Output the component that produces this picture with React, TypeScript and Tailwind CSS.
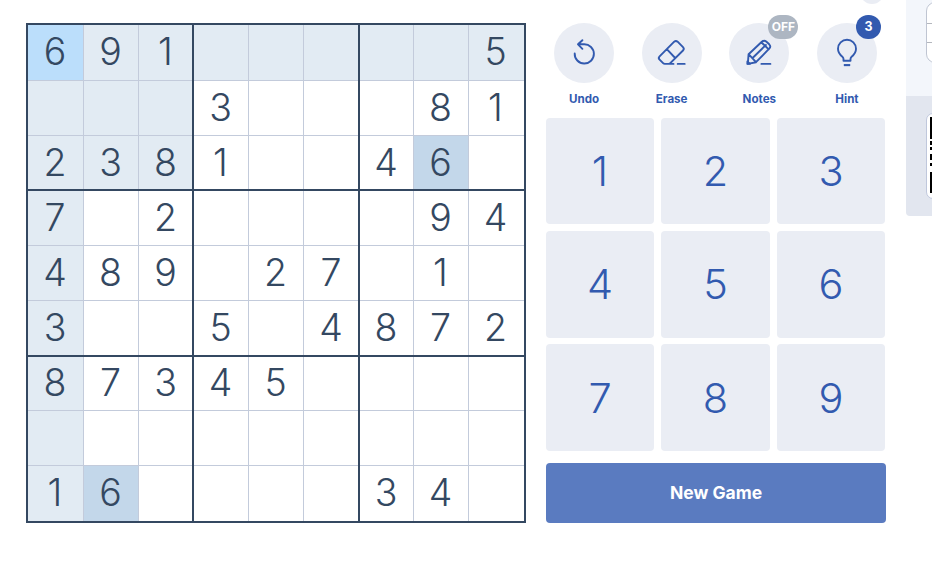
import React from "react";

const rows = [
  "691.....5",
  "...3...81",
  "2381..46.",
  "7.2....94",
  "489.27.1.",
  "3..5.4872",
  "87345....",
  ".........",
  "16....34.",
];

function cellColor(r: number, c: number) {
  if (r === 0 && c === 0) return "bg-[#bbdefb]";
  if (rows[r][c] === "6") return "bg-[#c3d7ea]";
  if (r === 0 || c === 0 || (r < 3 && c < 3)) return "bg-[#e2ebf3]";
  return "bg-white";
}

function Board() {
  return (
    <div className="grid h-[500px] w-[500px] shrink-0 grid-cols-[56px_55px_55px_55px_55px_56px_54px_55px_55px] grid-rows-[56px_55px_55px_55px_55px_56px_54px_55px_55px] border-2 border-[#344861]">
      {rows.flatMap((row, r) =>
        row.split("").map((d, c) => (
          <div
            key={`${r}-${c}`}
            className={[
              "relative flex items-center justify-center pb-[2px] text-[37.5px] leading-none font-light text-[#344861]",
              cellColor(r, c),
            ].join(" ")}
          >
            <span className="pr-[2px]">
              {d === "." ? "" : d}
            </span>
            {c < 8 && (
              <i
                className={
                  c % 3 === 2
                    ? "absolute inset-y-0 right-0 z-10 w-[2px] bg-[#344861]"
                    : "absolute inset-y-0 right-0 w-px bg-[#c3cbdb]"
                }
              />
            )}
            {r < 8 && (
              <i
                className={
                  r % 3 === 2
                    ? "absolute inset-x-0 bottom-0 z-10 h-[2px] bg-[#344861]"
                    : "absolute inset-x-0 bottom-0 h-px bg-[#c3cbdb]"
                }
              />
            )}
          </div>
        ))
      )}
    </div>
  );
}

const stroke = {
  fill: "none",
  stroke: "#325aaf",
  strokeWidth: 1.9,
  strokeLinecap: "round" as const,
  strokeLinejoin: "round" as const,
};

const UndoIcon = (
  <svg viewBox="0 0 60 60" className="size-[60px]" {...stroke}>
    <path d="M20.7 30.5A9.6 9.6 0 1 0 30 21.3H24.2M28.4 17.2 24 21.3l4.4 4.5" />
  </svg>
);
const EraseIcon = (
  <svg viewBox="0 0 60 60" className="size-[60px]" {...stroke}>
    <path d="M32.2 18.7q1.7-1.6 3.4 0l5.4 5.4q1.7 1.7 0 3.4L28.3 40.2q-.7.7-1.7.7h-3.8q-1 0-1.7-.7l-3.5-3.5q-1.7-1.7 0-3.4ZM24.8 26.2l8.4 8.8M26.5 40.9h5M35.7 40.9h7" />
  </svg>
);
const NotesIcon = (
  <svg viewBox="0 0 60 60" className="size-[60px]" {...stroke}>
    <path d="m19.6 31.2 13.2-12.5q2.3-2 4.4-.2l3 2.8q2.2 2.2 0 4.4L27 39.2l-8.2 1.7ZM19.6 31.2l7.4 8M23.3 35.2l13.6-13.2M32.3 19.2l7.4 7.2M32.4 40.9h9" />
    <path d="m18.4 38.5 2.6 2.4h-2.6Z" fill="#325aaf" />
  </svg>
);
const HintIcon = (
  <svg viewBox="0 0 60 60" className="size-[60px]" {...stroke}>
    <path d="M26.5 37.7v-1.6q0-1.5-1.1-2.4-4.4-3.3-4.4-7.9a9 9 0 0 1 18 0q0 4.6-4.4 7.9-1.1.9-1.1 2.4v1.6Z" />
    <path d="M26.8 42.1h6.4" strokeWidth="2.1" strokeLinecap="butt" />
  </svg>
);

function Tool({ icon, label, badge }: { icon: React.ReactNode; label: string; badge?: React.ReactNode }) {
  return (
    <div className="relative flex w-[60px] flex-col items-center">
      <div className="size-[60px] rounded-full bg-[#eaedf4]">{icon}</div>
      <span className="mt-2 text-[11.6px] leading-4 font-bold text-[#325aaf]">{label}</span>
      {badge}
    </div>
  );
}

function QrPreview() {
  return (
    <div className="h-[216px] w-[26px] shrink-0 overflow-hidden rounded-bl-[4px] bg-[#e2e6ef]">
      <div className="h-24 bg-[#f3f6fb] pl-5">
        <div className="flex h-[63px] w-10 flex-col pt-[2px]">
          <div className="flex h-[62px] flex-col rounded-[9px] border border-[#bfc5d2] bg-white">
            <div className="h-[21px] border-b border-[#b4b7be]" />
            <div className="h-[19px] border-b border-[#b4b7be]" />
          </div>
        </div>
      </div>
      <div className="pt-[17px] pl-5">
        <div className="h-[86px] w-20 rounded-[7px] border border-[#bfc7dc] bg-white pt-[3px] pl-[3px]">
          <svg viewBox="0 0 20 76" className="h-[76px] w-5" shapeRendering="crispEdges">
            <path d="M0 0h20v22H0zM0 24h20v4H0zM0 30h20v3H0zM0 37h20v6H0zM0 46h20v3H0zM0 55h20v21H0z" />
          </svg>
        </div>
      </div>
    </div>
  );
}

export default function App() {
  return (
    <div className="flex h-[568px] w-[932px] overflow-hidden bg-white font-['Inter','Liberation_Sans',sans-serif]">
      <div className="pt-[23px] pl-[26px]">
        <Board />
      </div>
      <div className="relative ml-5 w-[340px] shrink-0 pt-[23px]">
        <div className="absolute -top-[20px] left-[314px] size-6 rounded-full bg-[#eaedf4]" />
        <div className="flex h-[95px] justify-between pr-[9px] pl-2">
          <Tool icon={UndoIcon} label="Undo" />
          <Tool icon={EraseIcon} label="Erase" />
          <Tool
            icon={NotesIcon}
            label="Notes"
            badge={
              <span className="absolute -top-2 left-[39px] flex h-6 w-[30px] items-center justify-center rounded-full bg-[#adb6c2] text-[12px] font-bold text-white">
                OFF
              </span>
            }
          />
          <Tool
            icon={HintIcon}
            label="Hint"
            badge={
              <span className="absolute -top-2 left-[39px] flex h-6 w-[25px] items-center justify-center rounded-full bg-[#325aaf] text-[12.5px] font-bold text-white">
                3
              </span>
            }
          />
        </div>
        <div className="grid h-[333px] grid-cols-[108px_109px_108px] grid-rows-[106px_107px_107px] gap-x-[7px] gap-y-[6.5px]">
          {[1, 2, 3, 4, 5, 6, 7, 8, 9].map((n) => (
            <button
              key={n}
              className="flex items-center justify-center rounded-[4px] bg-[#eaedf4] pt-[2px] text-[41.5px] leading-none font-light text-[#325aaf]"
            >
              {n}
            </button>
          ))}
        </div>
        <button className="mt-3 flex h-[60px] w-[340px] items-center justify-center rounded-[4px] bg-[#5a7bc0] text-[17.5px] font-bold text-white">
          New Game
        </button>
      </div>
      <div className="ml-5">
        <QrPreview />
      </div>
    </div>
  );
}
